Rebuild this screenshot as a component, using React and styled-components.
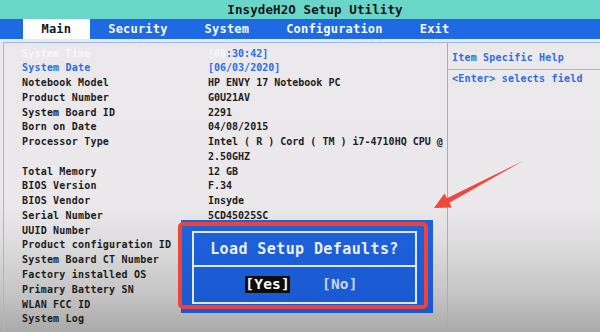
import React from "react";
import styled, { createGlobalStyle } from "styled-components";

const GlobalStyle = createGlobalStyle`
  html, body { margin: 0; padding: 0; }
  body { width: 600px; height: 332px; overflow: hidden; }
`;

const Screen = styled.div`
  position: relative;
  width: 600px;
  height: 332px;
  overflow: hidden;
  display: flex;
  flex-direction: column;
  background: linear-gradient(
    to bottom,
    #ece9ed 0px,
    #ebe8eb 205px,
    #dddcdd 245px,
    #c4c4c4 295px,
    #a9a9a9 332px
  );
  font-family: "DejaVu Sans Mono", "Liberation Mono", monospace;
  font-weight: bold;
`;

const TitleBar = styled.div`
  height: 19px;
  flex: none;
  background: #6ad6ca;
  color: #151515;
  font-size: 12.5px;
  line-height: 19px;
  text-align: center;
  padding-left: 30px;
  letter-spacing: 0.1px;
`;

const TabBar = styled.div`
  height: 20px;
  flex: none;
  background: #1e6ae2;
  display: flex;
  padding-left: 23px;
`;

const Tab = styled.div`
  padding: 0 18.5px;
  line-height: 20px;
  font-size: 12px;
  letter-spacing: 0.2px;
  color: ${(p) => (p.$active ? "#141414" : "#f4f8ff")};
  background: ${(p) => (p.$active ? "#ffffff" : "transparent")};
`;

const Panel = styled.div`
  flex: 1;
  margin: 3px 0 0 3px;
  border-top: 1px solid #9db6ee;
  border-left: 1px solid #9db6ee;
  display: grid;
  grid-template-columns: 443px 1fr;
`;

const LeftCol = styled.div`
  padding: 3.5px 0 0 18px;
`;

const Row = styled.div`
  display: grid;
  grid-template-columns: 186px 1fr;
  height: 14.78px;
  line-height: 14.78px;
  font-size: 10px;
  white-space: nowrap;
  color: #1c1c1c;
`;

const Label = styled.span`
  letter-spacing: 0.2px;
  color: ${(p) => p.$color || "#1c1c1c"};
`;

const Value = styled.span`
  letter-spacing: 0px;
  color: ${(p) => p.$color || "#1c1c1c"};
`;

const Hi = styled.span`
  color: ${(p) => p.$color};
`;

const RightCol = styled.div`
  border-left: 1px solid #8eaef0;
  display: flex;
  flex-direction: column;
  color: #2c6de4;
  font-size: 10px;
  letter-spacing: 0.2px;
`;

const HelpHead = styled.div`
  height: 27px;
  box-sizing: border-box;
  padding: 8px 0 0 4px;
  line-height: 14px;
  border-bottom: 1px solid #9db6ee;
`;

const HelpText = styled.div`
  padding: 2px 0 0 4px;
  line-height: 14px;
`;

const Dialog = styled.div`
  position: absolute;
  left: 181px;
  top: 220px;
  width: 252px;
  height: 93px;
  box-sizing: border-box;
  padding: 11px 16px 9px 11px;
  background: linear-gradient(to bottom, #1d62dc, #1a58cf);
  display: flex;
`;

const Frame = styled.div`
  flex: 1;
  border: 2px solid #dfe8fc;
  display: flex;
  flex-direction: column;
`;

const DialogTitle = styled.div`
  height: 32px;
  line-height: 32px;
  text-align: center;
  font-size: 15px;
  letter-spacing: 0.4px;
  color: #e9effd;
`;

const ButtonRow = styled.div`
  flex: 1;
  border-top: 2px solid #dfe8fc;
  display: flex;
  justify-content: center;
  align-items: center;
  gap: 31px;
  padding-right: 6px;
`;

const DialogButton = styled.span`
  font-size: 14.5px;
  line-height: 17px;
  padding: 0 0.5px;
  letter-spacing: 0.2px;
  color: ${(p) => (p.$selected ? "#ffffff" : "#c9d7f7")};
  background: ${(p) => (p.$selected ? "#0c0c0c" : "transparent")};
`;

const Annotation = styled.div`
  position: absolute;
  left: 178px;
  top: 222px;
  width: 250px;
  height: 87px;
  box-sizing: border-box;
  border: 4px solid #ef4338;
  border-radius: 5px;
  pointer-events: none;
`;

const ArrowLayer = styled.svg`
  position: absolute;
  left: 0;
  top: 0;
  width: 600px;
  height: 332px;
  pointer-events: none;
`;

const rows = [
  { label: "System Time", value: null, kind: "time" },
  { label: "System Date", value: "[06/03/2020]", kind: "date" },
  { label: "Notebook Model", value: "HP ENVY 17 Notebook PC" },
  { label: "Product Number", value: "G0U21AV" },
  { label: "System Board ID", value: "2291" },
  { label: "Born on Date", value: "04/08/2015" },
  { label: "Processor Type", value: "Intel ( R ) Cord ( TM ) i7-4710HQ CPU @" },
  { label: "", value: "2.50GHZ" },
  { label: "Total Memory", value: "12 GB" },
  { label: "BIOS Version", value: "F.34" },
  { label: "BIOS Vendor", value: "Insyde" },
  { label: "Serial Number", value: "5CD45025SC" },
  { label: "UUID Number", value: "" },
  { label: "Product configuration ID", value: "" },
  { label: "System Board CT Number", value: "" },
  { label: "Factory installed OS", value: "" },
  { label: "Primary Battery SN", value: "" },
  { label: "WLAN FCC ID", value: "" },
  { label: "System Log", value: "" },
];

const tabs = ["Main", "Security", "System", "Configuration", "Exit"];

export default function App() {
  return (
    <>
      <GlobalStyle />
      <Screen>
        <TitleBar>InsydeH2O Setup Utility</TitleBar>
        <TabBar>
          {tabs.map((t, i) => (
            <Tab key={t} $active={i === 0}>
              {t}
            </Tab>
          ))}
        </TabBar>
        <Panel>
          <LeftCol>
            {rows.map((r, i) => (
              <Row key={i}>
                <Label
                  $color={
                    r.kind === "time" ? "#f7f7fa" : r.kind === "date" ? "#2c6de4" : undefined
                  }
                >
                  {r.label}
                </Label>
                {r.kind === "time" ? (
                  <Value>
                    <Hi $color="#f7f7fa">[08</Hi>
                    <Hi $color="#2c6de4">:30:42]</Hi>
                  </Value>
                ) : (
                  <Value $color={r.kind === "date" ? "#2c6de4" : undefined}>{r.value}</Value>
                )}
              </Row>
            ))}
          </LeftCol>
          <RightCol>
            <HelpHead>Item Specific Help</HelpHead>
            <HelpText>&lt;Enter&gt; selects field</HelpText>
          </RightCol>
        </Panel>

        <Dialog>
          <Frame>
            <DialogTitle>Load Setup Defaults?</DialogTitle>
            <ButtonRow>
              <DialogButton $selected>[Yes]</DialogButton>
              <DialogButton>[No]</DialogButton>
            </ButtonRow>
          </Frame>
        </Dialog>
        <Annotation />
        <ArrowLayer viewBox="0 0 600 332">
          <polygon
            points="434,208 444.4,193.4 446.9,198.3 523,161 449.3,202.7 451.8,207.6"
            fill="#f0473b"
          />
        </ArrowLayer>
      </Screen>
    </>
  );
}
